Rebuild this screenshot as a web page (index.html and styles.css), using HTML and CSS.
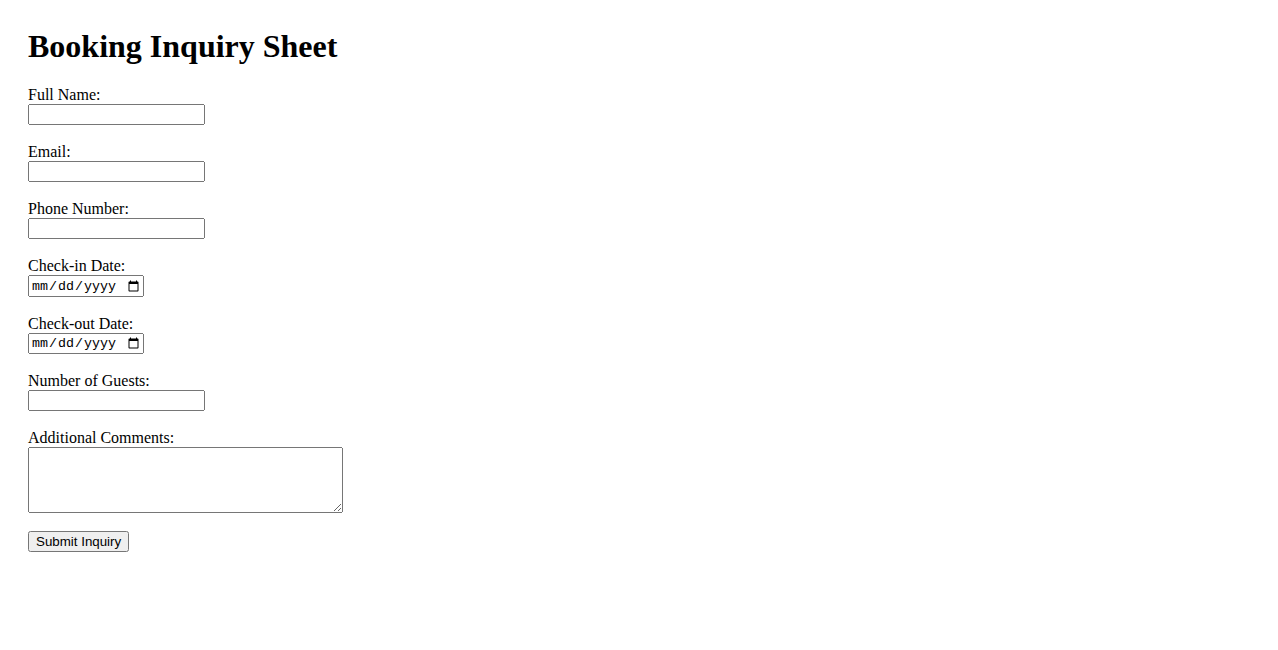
FILE: index.html
```html
<!DOCTYPE html>
<html lang="en">
<head>
<meta charset="utf-8">
<title>Booking Inquiry Sheet</title>
<link rel="stylesheet" href="styles.css">
</head>
<body>
<div class="page">
<h1 class="title">Booking Inquiry Sheet</h1>
<form class="form">
<label for="name">Full Name:</label><br>
<input class="field" type="text" id="name" name="name"><br><br>
<label for="email">Email:</label><br>
<input class="field" type="email" id="email" name="email"><br><br>
<label for="phone">Phone Number:</label><br>
<input class="field" type="tel" id="phone" name="phone"><br><br>
<label for="checkin">Check-in Date:</label><br>
<input class="date" type="date" id="checkin" name="checkin"><br><br>
<label for="checkout">Check-out Date:</label><br>
<input class="date" type="date" id="checkout" name="checkout"><br><br>
<label for="guests">Number of Guests:</label><br>
<input class="field" type="number" id="guests" name="guests"><br><br>
<label for="comments">Additional Comments:</label><br>
<textarea class="comments" id="comments" name="comments" rows="4" cols="40"></textarea><br><br>
<input class="submit" type="submit" value="Submit Inquiry">
</form>
</div>
</body>
</html>
```
FILE: styles.css
```css
body {
  margin: 8px;
  font-family: "Liberation Serif", "Times New Roman", serif;
  font-size: 16px;
  color: #000;
  background: #fff;
}
.page {
  padding: 20px;
}
.title {
  font-size: 32px;
  font-weight: bold;
  margin: 0 0 21.44px 0;
}
.field, .date, .comments, .submit {
  margin: 0;
}
.field {
  width: 177px;
  height: 21px;
  box-sizing: border-box;
  font-family: "Liberation Sans", Arial, sans-serif;
  font-size: 13.33px;
}
.date {
  width: 116px;
  height: 21.5px;
  box-sizing: border-box;
  font-family: "Liberation Mono", monospace;
  font-size: 13.33px;
}
.comments {
  width: 315px;
  height: 66px;
  box-sizing: border-box;
  vertical-align: bottom;
  font-family: "Liberation Mono", monospace;
  font-size: 13.33px;
}
.submit {
  font-family: "Liberation Sans", Arial, sans-serif;
  font-size: 13.33px;
}
```
